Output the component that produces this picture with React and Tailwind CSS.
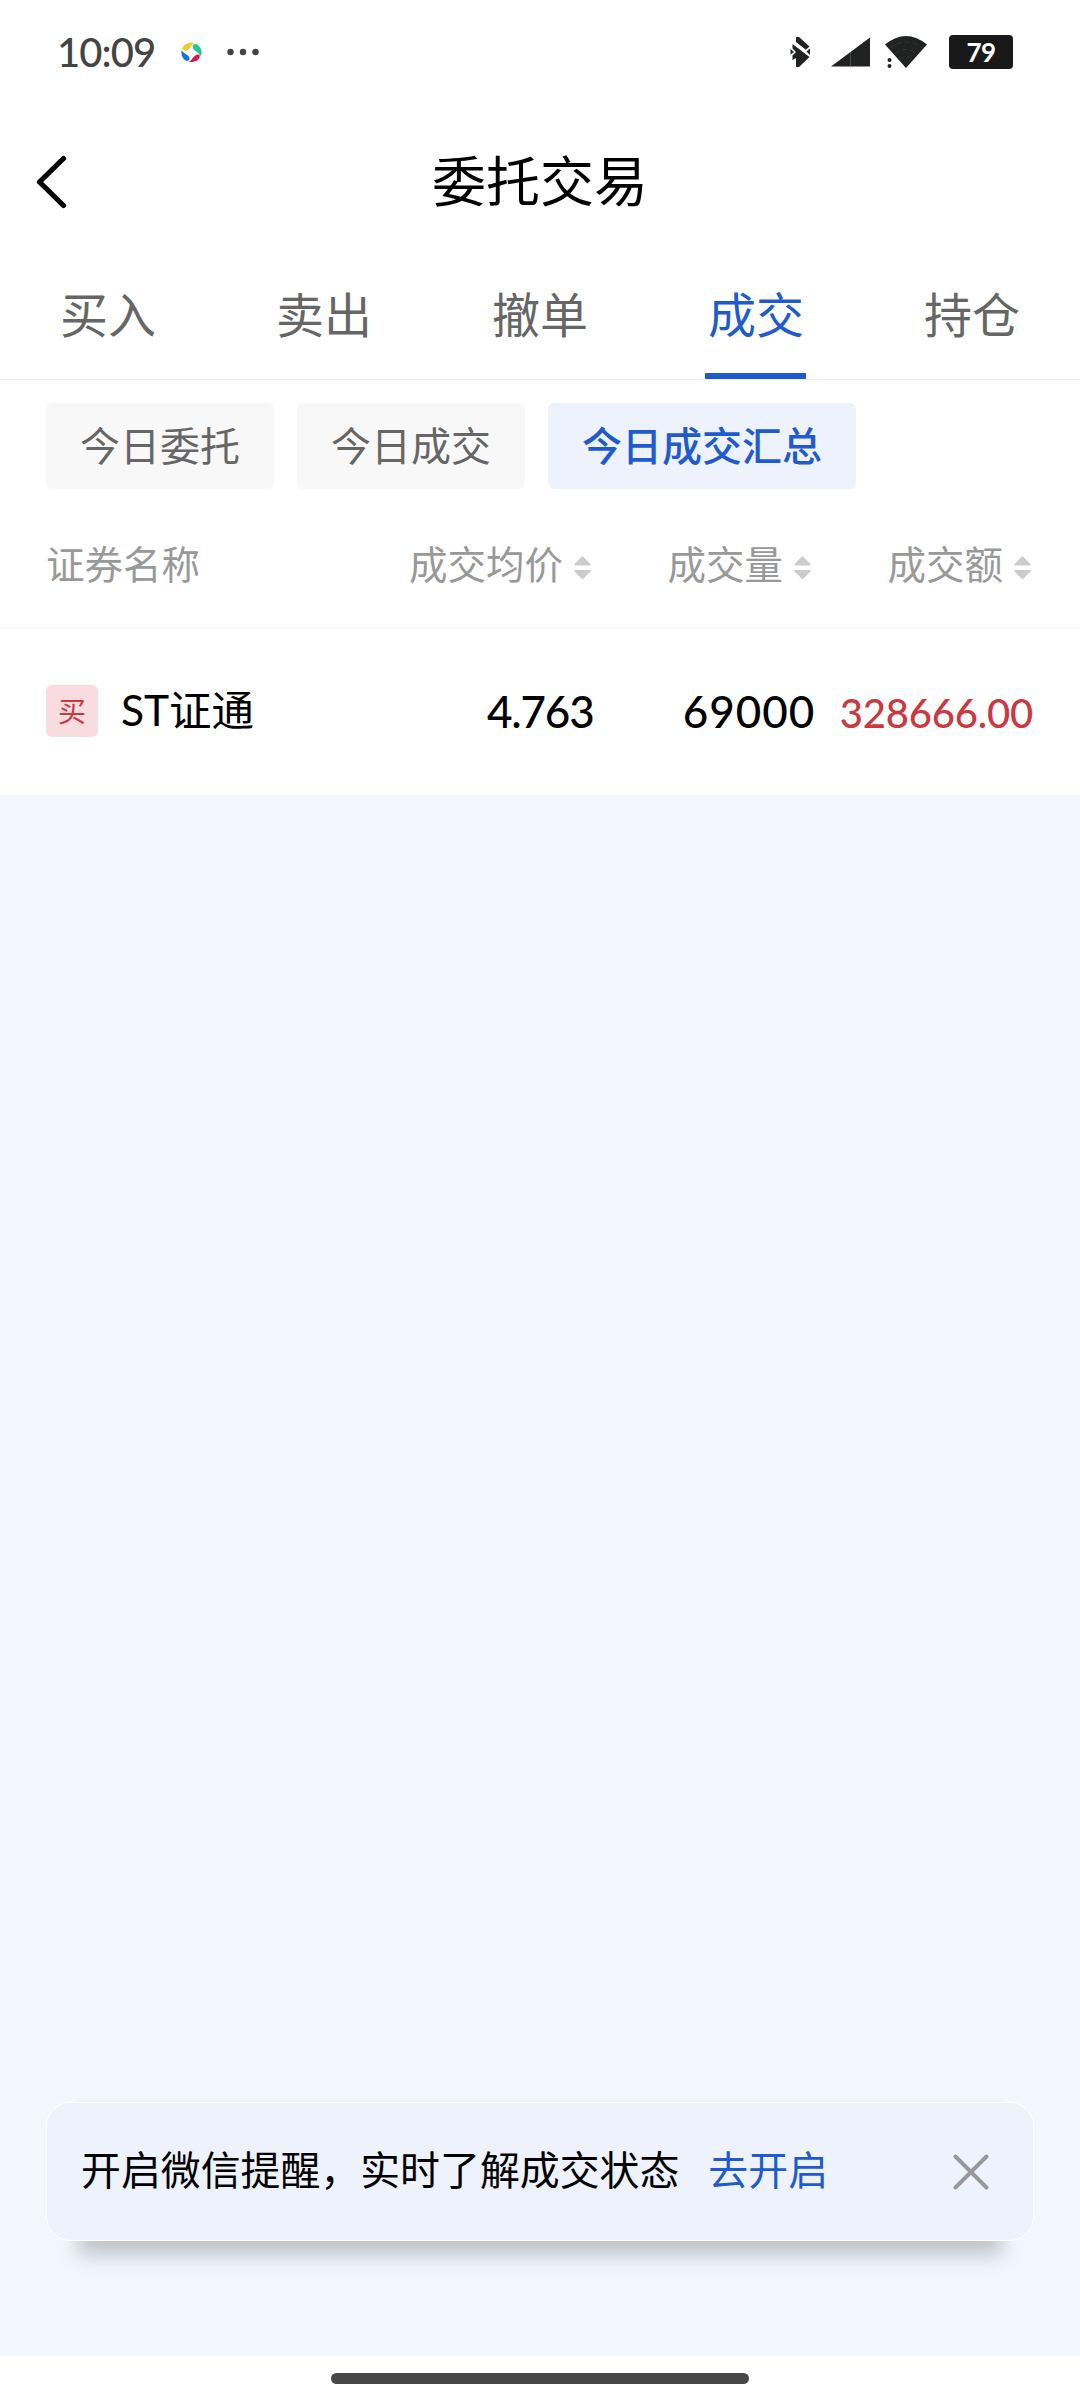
const FONT = "font-['Lato','Noto_Sans_CJK_SC',sans-serif]";

function StatusBar() {
  return (
    <div className="flex h-[104px] items-center pl-[57px] pr-[67px] text-[#444]">
      <span className="w-[124px] text-[40px] font-medium leading-none tracking-[-0.9px]">10:09</span>
      <svg width="21" height="21" viewBox="0 0 21 21">
        <path d="M.8 7.500C2 2.500 7 0 13.500 .6C10 3 9.500 7 6 8.500C3.500 9.500 2.500 6.500 .8 7.500Z" fill="#f2cb2b" />
        <path d="M12.500 2.500C15 .8 18 3 19.500 6C21 9.500 20.800 12 19.800 14.500C18.500 11 14.500 9.500 12.500 7C11.300 5.500 11.500 3.500 12.500 2.500Z" fill="#20c997" />
        <path d="M18.500 13C20 16 16 20.500 7.500 20.200C11 18.500 11.500 15.500 14 13.800C15.500 12.600 17.500 12 18.500 13Z" fill="#e2124f" />
        <path d="M.6 8.500C2.500 11.500 6 12 8 14.500C9 16 8.500 18.500 6.500 19C4.500 19 2 16.500 1 14C.2 12 .2 10 .6 8.500Z" fill="#1a73e0" />
      </svg>
      <svg className="ml-[25px]" width="32" height="8" viewBox="0 0 32 8" fill="#444">
        <circle cx="3.500" cy="4" r="3.200" />
        <circle cx="16" cy="4" r="3.200" />
        <circle cx="28.500" cy="4" r="3.200" />
      </svg>
      <svg className="ml-auto" width="22" height="32" viewBox="0 0 22 32" fill="#202322">
        <path d="M6 1H9L19.500 10.500L15.800 13.800L6 6Z" />
        <path d="M2.500 8L19.500 21L9 31H6V22L2.500 24V19.500L6 16L2.500 12.500Z" />
        <path d="M16.500 15.500L20 12.500V19Z" />
        <path d="M.5 13L4 16L.5 18.500Z" />
      </svg>
      <svg className="ml-[19px]" width="40" height="30" viewBox="0 0 40 30">
        <path d="M0 29.500L39 .5V29.500Z" fill="#202322" />
        <path d="M19.500 15V29.500" stroke="#4a4c4b" />
      </svg>
      <svg className="ml-[14px]" width="42" height="34" viewBox="0 0 42 34">
        <path d="M0 9.500Q21 -7.500 42 9.500L21 33Z" fill="#202322" />
        <path d="M5 13Q21 1 37 13M10 19Q21 10 32 19M15 24Q21 19 27 24" fill="none" stroke="#383b3a" strokeWidth="0.8" strokeDasharray="5 3" />
        <circle cx="4.500" cy="25" r="2" fill="#202322" />
        <circle cx="4.500" cy="31" r="2" fill="#202322" />
      </svg>
      <div className="ml-[22px] flex h-[34px] w-16 items-center justify-center rounded-[4px] bg-[#191919] text-[26px] font-bold leading-none tracking-[-0.5px] text-white">
        79
      </div>
    </div>
  );
}

function Sort() {
  return (
    <svg className="ml-[11px] mt-[8px]" width="17" height="24" viewBox="0 0 17 24" fill="#ccc">
      <path d="M8.500 0L16.500 8V9.500H.5V8Z" />
      <path d="M8.500 23.500L16.500 15.500V14H.5V15.500Z" />
    </svg>
  );
}

function Head({ label, className }) {
  return (
    <div className={"flex items-center justify-end " + className}>
      {label}
      <Sort />
    </div>
  );
}

export default function App() {
  return (
    <div className={"flex h-[2400px] w-[1080px] flex-col overflow-hidden bg-[#f2f6fe] text-black " + FONT}>
      <div className="bg-white">
        <StatusBar />
        <div className="grid h-[155px] grid-cols-[1fr_auto_1fr] items-center">
          <svg className="ml-[36px]" width="32" height="54" viewBox="0 0 32 54" fill="none" stroke="#000" strokeWidth="5.200" strokeLinecap="round" strokeLinejoin="round">
            <path d="M27.500 3.500L3.500 27L27.500 50.500" />
          </svg>
          <h1 className="text-[54px] leading-none">委托交易</h1>
        </div>
        <div className="flex h-[121px] border-b border-[#efefef] text-[48px] leading-none text-[#666]">
          {["买入", "卖出", "撤单", "成交", "持仓"].map((t) => (
            <div key={t} className={"relative flex flex-1 justify-center pt-[32px] " + (t === "成交" ? "text-[#1f5bcf]" : "")}>
              {t}
              {t === "成交" && <div className="absolute bottom-0 left-[57px] h-[6px] w-[101px] bg-[#1f5bcf]" />}
            </div>
          ))}
        </div>
        <div className="flex h-[110px] gap-[23px] pl-[46px] pt-[23px] text-[40px] leading-none text-[#666]">
          <div className="flex h-[86px] w-[228px] items-center justify-center rounded-[6px] bg-[#f8f8f8]">今日委托</div>
          <div className="flex h-[86px] w-[228px] items-center justify-center rounded-[6px] bg-[#f8f8f8]">今日成交</div>
          <div className="flex h-[86px] w-[308px] items-center justify-center rounded-[6px] bg-[#edf2fc] font-medium text-[#1f5bcf]">今日成交汇总</div>
        </div>
        <div className="flex h-[138px] items-center border-b border-[#f5f5f5] pl-[46px] pr-[49px] pt-[11px] text-[38.5px] leading-none text-[#999]">
          <div className="w-[300px]">证券名称</div>
          <Head label="成交均价" className="w-[245px]" />
          <Head label="成交量" className="w-[220px]" />
          <Head label="成交额" className="w-[220px]" />
        </div>
        <div className="flex h-[167px] items-center pb-[2px] pl-[46px] pr-[47px] text-[44px] leading-none">
          <div className="flex size-[52px] items-center justify-center rounded-[6px] bg-[#f9dcdf] text-[28px] text-[#c9393f]">买</div>
          <div className="ml-[23px] w-[180px] text-[42.5px]">ST证通</div>
          <div className="w-[293px] text-right font-medium tracking-[-1.2px]">4.763</div>
          <div className="w-[222px] text-right font-medium tracking-[1px]">69000</div>
          <div className="w-[218px] pt-[4px] text-right text-[40px] font-medium tracking-[-0.2px] text-[#c9393f]">
            328666.00
          </div>
        </div>
      </div>

      <div className="mx-[46px] mt-auto flex h-[139px] items-center rounded-[24px] border border-white bg-[#edf2fc] pb-[4px] pl-[34px] pr-[44px] text-[39.9px] leading-none shadow-[0_46px_19px_-32px_rgba(0,0,0,0.21),0_-34px_3px_-32px_rgba(0,0,0,0.03)]">
        <span>开启微信提醒，实时了解成交状态</span>
        <span className="ml-[29px] text-[#1f5bcf]">去开启</span>
        <svg className="ml-auto mt-[4px]" width="36" height="36" viewBox="0 0 36 36" stroke="#999" strokeWidth="3.900" strokeLinecap="round">
          <path d="M2.500 2.500L33.500 33.500M33.500 2.500L2.500 33.500" />
        </svg>
      </div>
      <div className="mt-[115px] flex h-[44px] justify-center bg-white pt-[17px]">
        <div className="h-[11px] w-[418px] rounded-full bg-[#474747]" />
      </div>
    </div>
  );
}
